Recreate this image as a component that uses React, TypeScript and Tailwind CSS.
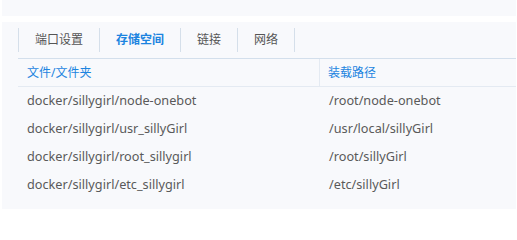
import * as React from 'react';

const tabs = ['端口设置', '存储空间', '链接', '网络'];

const mounts = [
  { src: 'docker/sillygirl/node-onebot', dest: '/root/node-onebot' },
  { src: 'docker/sillygirl/usr_sillyGirl', dest: '/usr/local/sillyGirl' },
  { src: 'docker/sillygirl/root_sillygirl', dest: '/root/sillyGirl' },
  { src: 'docker/sillygirl/etc_sillygirl', dest: '/etc/sillyGirl' },
];

const App: React.FC = () => {
  const active = 1;
  return (
    <div className="w-[517px] h-[210px] bg-white overflow-hidden font-['Noto_Sans','Noto_Sans_CJK_SC',sans-serif] text-[12px]">
      <div className="ml-[2px] mr-px h-[16px] bg-[#f8f9fc]" />
      <div className="ml-[2px] mr-px mt-[6px] h-[187px] bg-[#f8f9fc] pt-[6px] pl-[16px]">
        {/* tabs */}
        <div className="flex h-[24px]">
          {tabs.map((t, i) => (
            <div
              key={t}
              className={`flex items-center px-4 border-l border-[#d5dfea] ${i === tabs.length - 1 ? 'border-r' : ''} ${
                i === active ? 'text-[#1c84e0] font-bold' : 'text-[#555]'
              }`}
            >
              {t}
            </div>
          ))}
        </div>
        {/* table */}
        <div className="mt-[6px] border-t border-[#d3dfec]">
          <div className="flex h-[28px] border-b border-[#e4eaf2] text-[#1c84e0]">
            <div className="w-[302px] flex items-center pl-[9px] border-r border-[#e4eaf2]">文件/文件夹</div>
            <div className="flex-1 flex items-center pl-[8px]">装载路径</div>
          </div>
          {mounts.map(m => (
            <div key={m.src} className="flex h-[28px] text-[#5a5a5a] text-[12.7px]">
              <div className="w-[303px] flex items-center pl-[9px]">{m.src}</div>
              <div className="flex-1 flex items-center pl-[8px]">{m.dest}</div>
            </div>
          ))}
        </div>
      </div>
    </div>
  );
};

export default App;
